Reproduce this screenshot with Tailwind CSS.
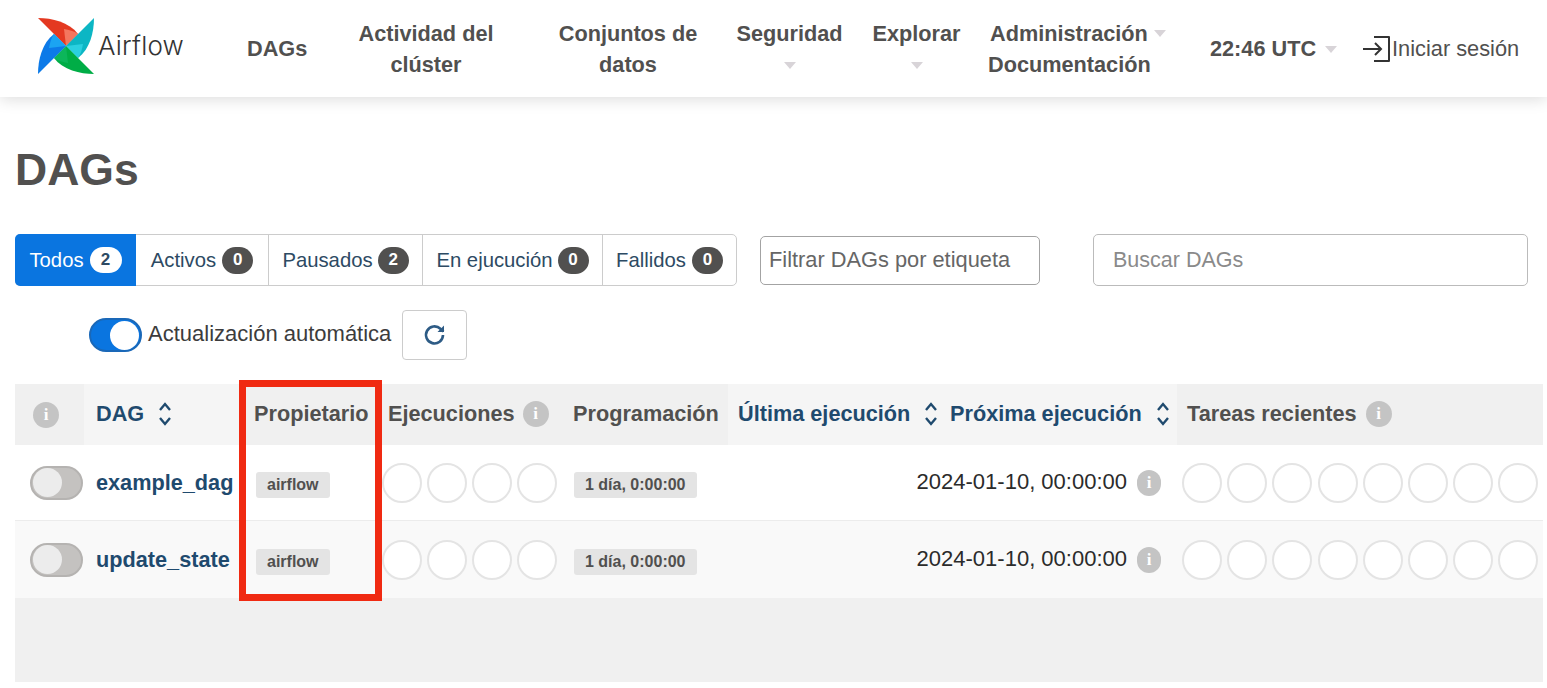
<!DOCTYPE html>
<html lang="es">
<head>
  <meta charset="UTF-8"/>
  <title>DAGs - Airflow</title>
  <script src="https://cdn.jsdelivr.net/npm/@tailwindcss/browser@4"></script>
</head>
<body class="bg-white text-[#51504f] font-['Liberation_Sans',Arial,sans-serif] w-[1547px] h-[688px] overflow-hidden relative">
  <!-- Navbar -->
  <header class="h-[97px] bg-white shadow-[0_3px_14px_rgba(0,0,0,0.13)] flex items-center relative">
    <svg class="ml-[38px] mt-[-6px] w-[56px] h-[56px] shrink-0" viewBox="-28 -28 56 56">
      <g>
        <path d="M-28-28C-14-28 3-24 12-12L0 0Z" fill="#e43921"/>
        <path d="M12-12L0 0-2-17C3-16 8-15 12-12Z" fill="#f4775e"/>
      </g>
      <g transform="rotate(90)">
        <path d="M-28-28C-14-28 3-24 12-12L0 0Z" fill="#0cb6c4"/>
        <path d="M12-12L0 0-2-17C3-16 8-15 12-12Z" fill="#2bd0e0"/>
      </g>
      <g transform="rotate(180)">
        <path d="M-28-28C-14-28 3-24 12-12L0 0Z" fill="#00ad46"/>
        <path d="M12-12L0 0-2-17C3-16 8-15 12-12Z" fill="#0cb65a"/>
      </g>
      <g transform="rotate(270)">
        <path d="M-28-28C-14-28 3-24 12-12L0 0Z" fill="#0c7ae8"/>
        <path d="M12-12L0 0-2-17C3-16 8-15 12-12Z" fill="#1ba4f2"/>
      </g>
    </svg>
    <span class="ml-[4px] mt-[-7px] text-[26px] font-['Inter',sans-serif] font-light tracking-[0.2px] text-[#333] w-[86px] shrink-0">Airflow</span>
    <nav class="flex items-center text-[21.7px] leading-[31px] font-bold text-center">
      <a class="ml-[63px] w-[60px] shrink-0">DAGs</a>
      <a class="ml-[51px] w-[136px] shrink-0 whitespace-nowrap">Actividad del<br>clúster</a>
      <a class="ml-[64px] w-[140px] shrink-0 whitespace-nowrap">Conjuntos de<br>datos</a>
      <div class="ml-[38px] w-[107px] shrink-0 flex flex-col items-center">
        <span>Seguridad</span>
        <span class="mt-[13px] mb-[11px] border-x-[6px] border-x-transparent border-t-[7px] border-t-[#d8d4d8]"></span>
      </div>
      <div class="ml-[29px] w-[89px] shrink-0 flex flex-col items-center">
        <span>Explorar</span>
        <span class="mt-[13px] mb-[11px] border-x-[6px] border-x-transparent border-t-[7px] border-t-[#d8d4d8]"></span>
      </div>
      <div class="ml-[27px] w-[180px] shrink-0 flex flex-col items-start">
        <span class="ml-[2px] flex items-center">Administración<span class="ml-[6px] border-x-[6px] border-x-transparent border-t-[7px] border-t-[#d8d4d8]"></span></span>
        <span>Documentación</span>
      </div>
      <div class="ml-[42px] w-[128px] shrink-0 flex items-center">
        <span class="whitespace-nowrap">22:46 UTC</span>
        <span class="ml-[9px] mt-[2px] border-x-[6px] border-x-transparent border-t-[7px] border-t-[#d8d4d8]"></span>
      </div>
      <div class="ml-[24px] flex items-center font-normal whitespace-nowrap">
        <svg class="w-[30px] h-[28px] shrink-0" viewBox="0 0 30 28" fill="none" stroke="#333" stroke-width="2">
          <path d="M1 14H19M13 8l6 6-6 6"/>
          <path d="M12 2H27V26H12" stroke-linejoin="round"/>
        </svg>
        <span class="text-[21.8px]">Iniciar sesión</span>
      </div>
    </nav>
  </header>

  <main class="pl-[15px] pr-[4px]">
    <h1 class="mt-[46px] text-[44.5px] leading-[54px] font-bold">DAGs</h1>

    <!-- Filters -->
    <div class="mt-[37px] flex items-center text-[20.3px] pr-[15px]">
      <div class="flex h-[52px] w-[722px] border border-[#ccc] rounded-[5px] text-[#2d4a63] shrink-0">
        <a class="w-[121px] -m-px mr-0 rounded-l-[5px] bg-[#0a75e0] text-white flex items-center justify-center gap-[6px]">Todos <span class="w-[32px] h-[26px] rounded-full bg-white text-[#2d4a63] text-[17px] font-bold flex items-center justify-center">2</span></a>
        <a class="w-[133px] border-r border-[#ccc] flex items-center justify-center gap-[6px]">Activos <span class="w-[31px] h-[27px] rounded-full bg-[#51504f] text-white text-[17px] font-bold flex items-center justify-center">0</span></a>
        <a class="w-[154px] border-r border-[#ccc] flex items-center justify-center gap-[5px]">Pausados <span class="w-[31px] h-[27px] rounded-full bg-[#51504f] text-white text-[17px] font-bold flex items-center justify-center">2</span></a>
        <a class="w-[180px] border-r border-[#ccc] flex items-center justify-center gap-[5px]">En ejucución <span class="w-[31px] h-[27px] rounded-full bg-[#51504f] text-white text-[17px] font-bold flex items-center justify-center">0</span></a>
        <a class="flex-1 flex items-center justify-center gap-[6px]">Fallidos <span class="w-[31px] h-[27px] rounded-full bg-[#51504f] text-white text-[17px] font-bold flex items-center justify-center">0</span></a>
      </div>
      <div class="ml-[23px] w-[280px] h-[49px] border border-[#a3a3a3] rounded-[5px] flex items-center pl-[8px] text-[21.8px] text-[#666] shrink-0">Filtrar DAGs por etiqueta</div>
      <div class="ml-[53px] w-[435px] h-[52px] border border-[#bbb] rounded-[5px] flex items-center pl-[19px] text-[21.5px] text-[#8a8a8a] shrink-0">Buscar DAGs</div>
    </div>

    <!-- Auto refresh -->
    <div class="mt-[24px] ml-[74px] flex items-center">
      <span class="w-[53px] h-[34px] rounded-full bg-[#0a75e0] border-2 border-[#1a68b8] flex items-center justify-end pr-[1px]"><span class="w-[29px] h-[29px] rounded-full bg-white"></span></span>
      <span class="ml-[6px] mb-[3px] text-[22px] text-[#3c3c3c]">Actualización automática</span>
      <span class="ml-[11px] w-[65px] h-[50px] border border-[#ccc] rounded-[4px] flex items-center justify-center">
        <svg class="w-[24px] h-[24px]" viewBox="0 0 24 24" fill="none" stroke="#2d5b85" stroke-width="2.6"><path d="M20 12a8.5 8.5 0 1 1-2.6-6.2L20.5 8.5"/><path d="M21 2.5V9h-6.5" fill="#2d5b85" stroke="none"/></svg>
      </span>
    </div>

    <!-- Table -->
    <div class="mt-[24px] h-[298px] bg-[#f0f0f0] text-[#51504f]">
      <div class="h-[61px] grid grid-cols-[69px_155px_141px_182px_166px_217px_232px_366px] items-center text-[21.7px] font-bold">
        <div class="h-full flex items-center pl-[18px]"><span class="w-[26px] h-[26px] rounded-full bg-[#c4c4c4] text-white text-[17px] flex items-center justify-center font-['Liberation_Serif',serif]">i</span></div>
        <div class="h-full bg-[#f5f5f5] flex items-center pl-[12px] pb-[1px] text-[#1f4a6e]">DAG
          <svg class="ml-[14px] w-[14px] h-[26px]" viewBox="0 0 14 26" fill="none" stroke="#1f4a6e" stroke-width="2.4"><path d="M2 9l5-6 5 6M2 17l5 6 5-6"/></svg>
        </div>
        <div class="pl-[15px] pb-[1px]">Propietario</div>
        <div class="flex items-center pl-[8px] pb-[1px]">Ejecuciones<span class="ml-[8px] w-[26px] h-[26px] rounded-full bg-[#c4c4c4] text-white text-[17px] flex items-center justify-center font-['Liberation_Serif',serif]">i</span></div>
        <div class="pl-[11px] pb-[1px]">Programación</div>
        <div class="h-full bg-[#f5f5f5] flex items-center pl-[10px] pb-[1px] text-[#1f4a6e] whitespace-nowrap">Última ejecución
          <svg class="ml-[14px] w-[14px] h-[26px]" viewBox="0 0 14 26" fill="none" stroke="#1f4a6e" stroke-width="2.4"><path d="M2 9l5-6 5 6M2 17l5 6 5-6"/></svg>
        </div>
        <div class="h-full bg-[#f5f5f5] flex items-center pl-[5px] pb-[1px] text-[#1f4a6e] whitespace-nowrap">Próxima ejecución
          <svg class="ml-[14px] w-[14px] h-[26px]" viewBox="0 0 14 26" fill="none" stroke="#1f4a6e" stroke-width="2.4"><path d="M2 9l5-6 5 6M2 17l5 6 5-6"/></svg>
        </div>
        <div class="flex items-center pl-[10px] pb-[1px]">Tareas recientes<span class="ml-[9px] w-[26px] h-[26px] rounded-full bg-[#c4c4c4] text-white text-[17px] flex items-center justify-center font-['Liberation_Serif',serif]">i</span></div>
      </div>

      <div class="h-[76px] bg-white border-b border-[#ececec] grid grid-cols-[69px_155px_141px_182px_166px_449px_366px] items-center">
        <div class="pl-[15px]"><span class="w-[53px] h-[34px] rounded-full bg-[#c4c2c0] border-2 border-[#b5b3b1] flex items-center pl-[1px]"><span class="w-[29px] h-[29px] rounded-full bg-[#ececec]"></span></span></div>
        <div class="pl-[12px] pt-[2px] text-[21.7px] font-bold text-[#1f4a6e] whitespace-nowrap">example_dag</div>
        <div class="pl-[17px] pt-[4px]"><span class="inline-block px-[11px] h-[26px] leading-[26px] rounded-[3px] bg-[#e4e4e4] text-[16px] font-bold text-[#51504f]">airflow</span></div>
        <div class="flex gap-[5px] pl-[2px]">
          <span class="w-[40px] h-[40px] rounded-full bg-white border-2 border-[#e4e4e4] shrink-0"></span>
          <span class="w-[40px] h-[40px] rounded-full bg-white border-2 border-[#e4e4e4] shrink-0"></span>
          <span class="w-[40px] h-[40px] rounded-full bg-white border-2 border-[#e4e4e4] shrink-0"></span>
          <span class="w-[40px] h-[40px] rounded-full bg-white border-2 border-[#e4e4e4] shrink-0"></span>
        </div>
        <div class="pl-[12px] pt-[4px]"><span class="inline-block px-[11px] h-[26px] leading-[26px] rounded-[3px] bg-[#e4e4e4] text-[16px] font-bold text-[#51504f] whitespace-nowrap">1 día, 0:00:00</span></div>
        <div class="flex items-center justify-end pr-[16px] text-[22px] text-[#2b2b2b]"><span class="mb-[2px]">2024-01-10, 00:00:00</span><span class="ml-[10px] w-[24px] h-[26px] rounded-full bg-[#c4c4c4] text-white text-[17px] font-bold flex items-center justify-center font-['Liberation_Serif',serif]">i</span></div>
        <div class="flex gap-[5.2px] pl-[5px]">
          <span class="w-[40px] h-[40px] rounded-full bg-white border-2 border-[#e4e4e4] shrink-0"></span>
          <span class="w-[40px] h-[40px] rounded-full bg-white border-2 border-[#e4e4e4] shrink-0"></span>
          <span class="w-[40px] h-[40px] rounded-full bg-white border-2 border-[#e4e4e4] shrink-0"></span>
          <span class="w-[40px] h-[40px] rounded-full bg-white border-2 border-[#e4e4e4] shrink-0"></span>
          <span class="w-[40px] h-[40px] rounded-full bg-white border-2 border-[#e4e4e4] shrink-0"></span>
          <span class="w-[40px] h-[40px] rounded-full bg-white border-2 border-[#e4e4e4] shrink-0"></span>
          <span class="w-[40px] h-[40px] rounded-full bg-white border-2 border-[#e4e4e4] shrink-0"></span>
          <span class="w-[40px] h-[40px] rounded-full bg-white border-2 border-[#e4e4e4] shrink-0"></span>
        </div>
      </div>

      <div class="h-[77px] bg-[#f9f9f9] grid grid-cols-[69px_155px_141px_182px_166px_449px_366px] items-center">
        <div class="pl-[15px]"><span class="w-[53px] h-[34px] rounded-full bg-[#c4c2c0] border-2 border-[#b5b3b1] flex items-center pl-[1px]"><span class="w-[29px] h-[29px] rounded-full bg-[#ececec]"></span></span></div>
        <div class="pl-[12px] pt-[2px] text-[21.7px] font-bold text-[#1f4a6e] whitespace-nowrap">update_state</div>
        <div class="pl-[17px] pt-[4px]"><span class="inline-block px-[11px] h-[26px] leading-[26px] rounded-[3px] bg-[#e4e4e4] text-[16px] font-bold text-[#51504f]">airflow</span></div>
        <div class="flex gap-[5px] pl-[2px]">
          <span class="w-[40px] h-[40px] rounded-full bg-white border-2 border-[#e4e4e4] shrink-0"></span>
          <span class="w-[40px] h-[40px] rounded-full bg-white border-2 border-[#e4e4e4] shrink-0"></span>
          <span class="w-[40px] h-[40px] rounded-full bg-white border-2 border-[#e4e4e4] shrink-0"></span>
          <span class="w-[40px] h-[40px] rounded-full bg-white border-2 border-[#e4e4e4] shrink-0"></span>
        </div>
        <div class="pl-[12px] pt-[4px]"><span class="inline-block px-[11px] h-[26px] leading-[26px] rounded-[3px] bg-[#e4e4e4] text-[16px] font-bold text-[#51504f] whitespace-nowrap">1 día, 0:00:00</span></div>
        <div class="flex items-center justify-end pr-[16px] text-[22px] text-[#2b2b2b]"><span class="mb-[2px]">2024-01-10, 00:00:00</span><span class="ml-[10px] w-[24px] h-[26px] rounded-full bg-[#c4c4c4] text-white text-[17px] font-bold flex items-center justify-center font-['Liberation_Serif',serif]">i</span></div>
        <div class="flex gap-[5.2px] pl-[5px]">
          <span class="w-[40px] h-[40px] rounded-full bg-white border-2 border-[#e4e4e4] shrink-0"></span>
          <span class="w-[40px] h-[40px] rounded-full bg-white border-2 border-[#e4e4e4] shrink-0"></span>
          <span class="w-[40px] h-[40px] rounded-full bg-white border-2 border-[#e4e4e4] shrink-0"></span>
          <span class="w-[40px] h-[40px] rounded-full bg-white border-2 border-[#e4e4e4] shrink-0"></span>
          <span class="w-[40px] h-[40px] rounded-full bg-white border-2 border-[#e4e4e4] shrink-0"></span>
          <span class="w-[40px] h-[40px] rounded-full bg-white border-2 border-[#e4e4e4] shrink-0"></span>
          <span class="w-[40px] h-[40px] rounded-full bg-white border-2 border-[#e4e4e4] shrink-0"></span>
          <span class="w-[40px] h-[40px] rounded-full bg-white border-2 border-[#e4e4e4] shrink-0"></span>
        </div>
      </div>
    </div>
  </main>

  <!-- Red highlight over the owner column -->
  <div class="absolute left-[239px] top-[380px] w-[143px] h-[221px] border-[7px] border-[#f02a12]"></div>
</body>
</html>
